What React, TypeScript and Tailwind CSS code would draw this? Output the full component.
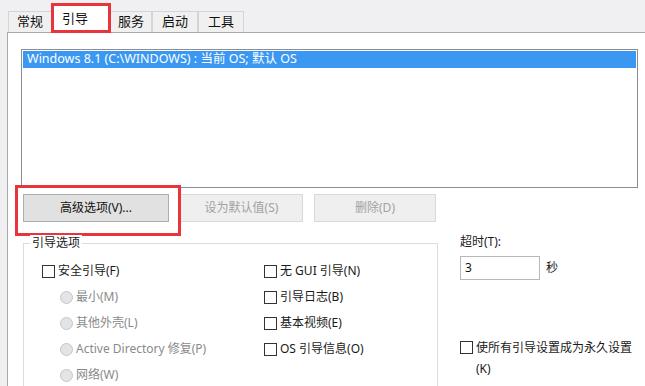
import React from "react";

const font = { fontFamily: '"Noto Sans", "Noto Sans CJK SC", sans-serif' };

function Tab({ label, selected, w }: { label: string; selected?: boolean; w: string }) {
  if (selected) {
    return (
      <div className="relative z-10 -mb-px flex h-[30px] w-[58px] shrink-0 items-start bg-white pl-[10px] pt-[7px] text-[13px] leading-[16px] text-[#111]">
        <span>{label}</span>
        <div className="pointer-events-none absolute -left-[1px] top-0 h-[30px] w-[60px] border-[3px] border-[#e8343a]" />
      </div>
    );
  }
  return (
    <div className={`flex h-[21px] shrink-0 items-center justify-center border border-b-0 border-[#d4d4d4] bg-[#f0f0f0] text-[13px] text-[#111] ${w}`}>
      {label}
    </div>
  );
}

function Checkbox({ label }: { label: React.ReactNode }) {
  return (
    <div className="flex h-[26px] items-center gap-[3px] text-[12px] text-[#1a1a1a]">
      <span className="h-[13px] w-[13px] shrink-0 border border-[#333] bg-white" />
      <span>{label}</span>
    </div>
  );
}

function Radio({ label }: { label: string }) {
  return (
    <div className="flex h-[26px] items-center gap-[3px] text-[12px] text-[#8a8a8a]">
      <span className="h-[13px] w-[13px] shrink-0 rounded-full border border-[#c6c6c6] bg-[#e4e4e4]" />
      <span>{label}</span>
    </div>
  );
}

export default function App() {
  return (
    <div className="relative flex h-[386px] w-[645px] flex-col overflow-hidden bg-[#f0eff2]" style={font}>
      {/* tabs */}
      <div className="flex h-[32px] shrink-0 items-end pl-[8px]">
        <Tab label="常规" w="w-[44px]" />
        <Tab label="引导" selected w="" />
        <Tab label="服务" w="w-[42px]" />
        <Tab label="启动" w="w-[46px]" />
        <Tab label="工具" w="w-[46px]" />
      </div>
      {/* panel */}
      <div className="ml-[7px] min-h-0 flex-1 overflow-hidden border-l border-t border-[#a9a9a9] bg-white pl-[13px] pt-[16px]">
        {/* list */}
        <div className="h-[139px] w-[617px] border border-[#8a8d93] p-px">
          <div className="flex h-[17px] items-center bg-[#3a98f3] pl-[4px] text-[12.5px] text-white">
            Windows 8.1 (C:\WINDOWS) : 当前 OS; 默认 OS
          </div>
        </div>
        {/* buttons */}
        <div className="mt-[6px] flex gap-[11px] pl-[2px]">
          <div className="relative flex h-[28px] w-[146px] items-center justify-center border border-[#adadad] bg-[#e1e1e1] text-[12px] text-[#111]">
            高级选项(V)...
            <div className="pointer-events-none absolute -left-[9px] -top-[10px] h-[51px] w-[166px] border-[3px] border-[#e8343a]" />
          </div>
          <div className="flex h-[28px] w-[123px] items-center justify-center border border-[#d9d9d9] bg-[#efefef] text-[12px] text-[#a2a2a2]">
            设为默认值(S)
          </div>
          <div className="flex h-[28px] w-[122px] items-center justify-center border border-[#d9d9d9] bg-[#efefef] text-[12px] text-[#a2a2a2]">
            删除(D)
          </div>
        </div>
        {/* lower */}
        <div className="mt-[21px] flex pl-[2px]">
          {/* group box */}
          <div className="relative h-[200px] w-[415px] shrink-0 border border-[#dcdcdc] pl-[18px] pt-[14px]">
            <div className="absolute -top-[9px] left-[6px] bg-white px-[2px] text-[12px] leading-[16px] text-[#1a1a1a]">
              引导选项
            </div>
            <div className="flex">
              <div className="w-[222px]">
                <Checkbox label="安全引导(F)" />
                <div className="pl-[18px]">
                  <Radio label="最小(M)" />
                  <Radio label="其他外壳(L)" />
                  <Radio label="Active Directory 修复(P)" />
                  <Radio label="网络(W)" />
                </div>
              </div>
              <div>
                <Checkbox label="无 GUI 引导(N)" />
                <Checkbox label="引导日志(B)" />
                <Checkbox label="基本视频(E)" />
                <Checkbox label="OS 引导信息(O)" />
              </div>
            </div>
          </div>
          {/* right */}
          <div className="ml-[22px] flex flex-col">
            <div className="-mt-[9px] text-[12px] leading-[16px] text-[#1a1a1a]">超时(T):</div>
            <div className="mt-[6px] flex items-center">
              <div className="flex h-[24px] w-[80px] items-center border border-[#b8b8b8] pl-[4px] text-[12px] text-[#111]">
                3
              </div>
              <span className="ml-[6px] text-[12px] text-[#1a1a1a]">秒</span>
            </div>
            <div className="mt-[57px] flex w-[180px] items-start gap-[3px] text-[12px] leading-[21px] text-[#1a1a1a]">
              <span className="mt-[4px] h-[13px] w-[13px] shrink-0 border border-[#333] bg-white" />
              <span>使所有引导设置成为永久设置 (K)</span>
            </div>
          </div>
        </div>
      </div>
    </div>
  );
}
